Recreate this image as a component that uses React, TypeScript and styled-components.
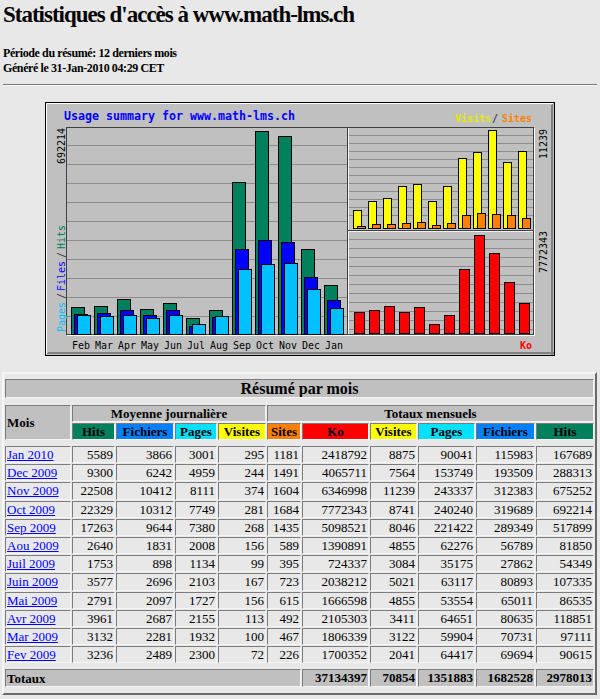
import React from 'react';
import styled, { createGlobalStyle } from 'styled-components';

const GlobalStyle = createGlobalStyle`
  html, body { margin: 0; padding: 0; background: #E8E8E8; }
  body { font-family: "Liberation Serif", "Times New Roman", serif; color: #000; }
`;

const Page = styled.div`
  padding: 0 3px 0 3px;
  width: 600px;
  box-sizing: border-box;
`;

const Title = styled.h2`
  margin: 0;
  font-size: 23px;
  line-height: 30px;
  letter-spacing: -1px;
  font-weight: bold;
`;

const Meta = styled.div`
  margin-top: 16px;
  font-size: 12px;
  line-height: 15px;
  letter-spacing: -0.4px;
  font-weight: bold;
`;

const Rule = styled.hr`
  margin: 8px 0 0 0;
  border: 0;
  border-top: 1px solid #7a7a7a;
  border-bottom: 1px solid #f8f8f8;
  height: 0;
`;

const ChartRow = styled.div`
  display: flex;
  justify-content: center;
  margin-top: 16px;
`;

const ChartSvg = styled.svg`
  display: block;
`;

const Summary = styled.table`
  margin-top: 16px;
  width: 595px;
  margin-left: -1px;
  table-layout: fixed;
  border-collapse: separate;
  border-spacing: 1px;
  border: 2px solid;
  border-color: #f6f6f6 #6a6a6a #6a6a6a #f6f6f6;
  font-size: 13px;
`;

const Spacer = styled.td<{ $h: number }>`
  height: ${(p) => p.$h}px;
  padding: 0;
  border: 0;
  line-height: 0;
  font-size: 0;
`;

const HeadCell = styled.th<{ $bg?: string; $align?: string; $big?: boolean }>`
  background: ${(p) => p.$bg || '#C0C0C0'};
  text-align: ${(p) => p.$align || 'center'};
  font-size: ${(p) => (p.$big ? '16px' : '13px')};
  line-height: ${(p) => (p.$big ? '17px' : '15px')};
  font-weight: bold;
  padding: 0 1px;
  border: 1px solid;
  border-color: #7c7c7c #f4f4f4 #f4f4f4 #7c7c7c;
  white-space: nowrap;
  overflow: hidden;
`;

const DataCell = styled.td<{ $bold?: boolean; $gray?: boolean }>`
  text-align: right;
  padding: 0 1px;
  line-height: 15.2px;
  font-weight: ${(p) => (p.$bold ? 'bold' : 'normal')};
  background: ${(p) => (p.$gray ? '#C0C0C0' : 'transparent')};
  border: 1px solid;
  border-color: #7c7c7c #f4f4f4 #f4f4f4 #7c7c7c;
  white-space: nowrap;
  overflow: hidden;
`;

const MonthCell = styled(DataCell)`
  text-align: left;
`;

const MonthLink = styled.a`
  color: #0000ff;
  text-decoration: underline;
`;

const months = ['Feb', 'Mar', 'Apr', 'May', 'Jun', 'Jul', 'Aug', 'Sep', 'Oct', 'Nov', 'Dec', 'Jan'];
const hits = [90615, 97111, 118851, 86535, 107335, 54349, 81850, 517899, 692214, 675252, 288313, 167689];
const files = [69694, 70731, 80635, 65011, 80893, 27862, 56789, 289349, 319689, 312383, 193509, 115983];
const pages = [64417, 59904, 64651, 53554, 63117, 35175, 62276, 221422, 240240, 243337, 153749, 90041];
const visits = [2041, 3122, 3411, 4855, 5021, 3084, 4855, 8046, 8741, 11239, 7564, 8875];
const sites = [226, 467, 492, 615, 723, 395, 589, 1435, 1684, 1604, 1491, 1181];
const kb = [1700352, 1806339, 2105303, 1666598, 2038212, 724337, 1390891, 5098521, 7772343, 6346998, 4065711, 2418792];

const rows: [string, number[]][] = [
  ['Jan 2010', [5589, 3866, 3001, 295, 1181, 2418792, 8875, 90041, 115983, 167689]],
  ['Dec 2009', [9300, 6242, 4959, 244, 1491, 4065711, 7564, 153749, 193509, 288313]],
  ['Nov 2009', [22508, 10412, 8111, 374, 1604, 6346998, 11239, 243337, 312383, 675252]],
  ['Oct 2009', [22329, 10312, 7749, 281, 1684, 7772343, 8741, 240240, 319689, 692214]],
  ['Sep 2009', [17263, 9644, 7380, 268, 1435, 5098521, 8046, 221422, 289349, 517899]],
  ['Aou 2009', [2640, 1831, 2008, 156, 589, 1390891, 4855, 62276, 56789, 81850]],
  ['Juil 2009', [1753, 898, 1134, 99, 395, 724337, 3084, 35175, 27862, 54349]],
  ['Juin 2009', [3577, 2696, 2103, 167, 723, 2038212, 5021, 63117, 80893, 107335]],
  ['Mai 2009', [2791, 2097, 1727, 156, 615, 1666598, 4855, 53554, 65011, 86535]],
  ['Avr 2009', [3961, 2687, 2155, 113, 492, 2105303, 3411, 64651, 80635, 118851]],
  ['Mar 2009', [3132, 2281, 1932, 100, 467, 1806339, 3122, 59904, 70731, 97111]],
  ['Fev 2009', [3236, 2489, 2300, 72, 226, 1700352, 2041, 64417, 69694, 90615]],
];

const totals = [37134397, 70854, 1351883, 1682528, 2978013];
const colWidths = [66, 43, 58, 42, 48, 34, 67, 47, 57, 59, 58];

const W = 510;
const H = 254;
const FONT = '"DejaVu Sans Mono", "Liberation Mono", monospace';

function Bar({ x, y, w, bottom, fill }: { x: number; y: number; w: number; bottom: number; fill: string }) {
  const top = Math.round(y);
  return <rect x={x + 0.5} y={top + 0.5} width={w} height={Math.max(bottom - top, 0)} fill={fill} stroke="#000" strokeWidth={1} />;
}

function MonoText({ x, y, text, fill, bold, size = 10, adv = 6 }: { x: number; y: number; text: string; fill: string; bold?: boolean; size?: number; adv?: number }) {
  return (
    <text x={x} y={y} fill={fill} fontFamily={FONT} fontSize={size} fontWeight={bold ? 'bold' : 'normal'} textLength={text.length * adv} lengthAdjust="spacingAndGlyphs">
      {text}
    </text>
  );
}

function UpText({ x, y, text, fill }: { x: number; y: number; text: string; fill: string }) {
  return (
    <g transform={`translate(${x} ${y}) rotate(-90)`}>
      <MonoText x={0} y={0} text={text} fill={fill} />
    </g>
  );
}

function UsageChart() {
  const maxHits = Math.max(...hits);
  const maxVisits = Math.max(...visits);
  const maxKb = Math.max(...kb);
  const leftLines = Array.from({ length: 10 }, (_, i) => 24 + 19 * (i + 1));
  const trLines = Array.from({ length: 11 }, (_, i) => 25 + 8 * (i + 1)).filter((v) => v < 127);
  const brLines = Array.from({ length: 11 }, (_, i) => 128 + 9 * (i + 1)).filter((v) => v < 231);
  return (
    <ChartSvg width={W} height={H} viewBox={`0 0 ${W} ${H}`}>
      <rect x={0} y={0} width={W} height={H} fill="#C0C0C0" />
      {/* outer bevel */}
      <rect x={0.5} y={0.5} width={W - 1} height={H - 1} fill="none" stroke="#000" />
      <line x1={1} y1={1.5} x2={W - 2} y2={1.5} stroke="#fff" />
      <line x1={1.5} y1={1} x2={1.5} y2={H - 2} stroke="#fff" />
      <line x1={2} y1={H - 2.5} x2={W - 1} y2={H - 2.5} stroke="#808080" />
      <line x1={3} y1={H - 3.5} x2={W - 1} y2={H - 3.5} stroke="#808080" />
      <line x1={W - 2.5} y1={2} x2={W - 2.5} y2={H - 1} stroke="#808080" />
      <line x1={W - 3.5} y1={3} x2={W - 3.5} y2={H - 1} stroke="#808080" />

      {/* grid lines */}
      {leftLines.map((y) => (
        <line key={`l${y}`} x1={22} y1={y + 0.5} x2={302} y2={y + 0.5} stroke="#8c8c8c" />
      ))}
      {trLines.map((y) => (
        <line key={`t${y}`} x1={303} y1={y + 0.5} x2={488} y2={y + 0.5} stroke="#8c8c8c" />
      ))}
      {brLines.map((y) => (
        <line key={`b${y}`} x1={303} y1={y + 0.5} x2={488} y2={y + 0.5} stroke="#8c8c8c" />
      ))}

      {/* frames */}
      <rect x={21.5} y={25.5} width={467} height={207} fill="none" stroke="#404040" />
      <line x1={22} y1={233.5} x2={490} y2={233.5} stroke="#fff" />
      <line x1={489.5} y1={26} x2={489.5} y2={234} stroke="#fff" />
      <line x1={302.5} y1={26} x2={302.5} y2={232} stroke="#404040" />
      <line x1={303.5} y1={26} x2={303.5} y2={232} stroke="#f0f0f0" />
      <line x1={303} y1={128.5} x2={488} y2={128.5} stroke="#404040" />
      <line x1={303} y1={129.5} x2={488} y2={129.5} stroke="#f0f0f0" />

      {/* hits / files / pages */}
      {hits.map((v, i) => (
        <g key={`h${i}`}>
          <Bar x={26 + i * 23} y={232 - (v / maxHits) * 203} w={13} bottom={232} fill="#00805C" />
          <Bar x={29 + i * 23} y={232 - (files[i] / maxHits) * 203} w={13} bottom={232} fill="#0000FF" />
          <Bar x={32 + i * 23} y={232 - (pages[i] / maxHits) * 203} w={13} bottom={232} fill="#00C0FF" />
        </g>
      ))}

      {/* visits / sites */}
      {visits.map((v, i) => (
        <g key={`v${i}`}>
          <Bar x={308 + i * 15} y={126 - (v / maxVisits) * 98} w={8} bottom={126} fill="#FFFF00" />
          <Bar x={312 + i * 15} y={126 - (sites[i] / maxVisits) * 98} w={8} bottom={126} fill="#FF8000" />
        </g>
      ))}

      {/* kbytes */}
      {kb.map((v, i) => (
        <Bar key={`k${i}`} x={309 + i * 15} y={231 - (v / maxKb) * 98} w={10} bottom={231} fill="#FF0000" />
      ))}

      {/* labels */}
      <MonoText x={19} y={18} text="Usage summary for www.math-lms.ch" fill="#0000FF" bold size={11.5} adv={7} />
      <MonoText x={410} y={20} text="Visits" fill="#E8E800" bold />
      <MonoText x={447} y={20} text="/" fill="#404040" bold />
      <MonoText x={457} y={20} text="Sites" fill="#FF8000" bold />
      {months.map((m, i) => (
        <MonoText key={m} x={27 + i * 23} y={247} text={m} fill="#000" />
      ))}
      <MonoText x={475} y={247} text="Ko" fill="#FF0000" bold />
      <UpText x={19.5} y={62} text="692214" fill="#000" />
      <UpText x={19.5} y={230} text="Pages" fill="#00C0FF" />
      <UpText x={19.5} y={197} text="/" fill="#404040" />
      <UpText x={19.5} y={189} text="Files" fill="#0000FF" />
      <UpText x={19.5} y={156} text="/" fill="#404040" />
      <UpText x={19.5} y={147} text="Hits" fill="#00805C" />
      <UpText x={502} y={57} text="11239" fill="#000" />
      <UpText x={502} y={171} text="7772343" fill="#000" />
    </ChartSvg>
  );
}

export default function App() {
  return (
    <Page>
      <GlobalStyle />
      <Title>Statistiques d'accès à www.math-lms.ch</Title>
      <Meta>
        Période du résumé: 12 derniers mois
        <br />
        Généré le 31-Jan-2010 04:29 CET
      </Meta>
      <Rule />
      <ChartRow>
        <UsageChart />
      </ChartRow>
      <Summary>
        <colgroup>
          {colWidths.map((w, i) => (
            <col key={i} style={{ width: w }} />
          ))}
        </colgroup>
        <tbody>
          <tr>
            <Spacer $h={3} colSpan={11} />
          </tr>
          <tr>
            <HeadCell colSpan={11} $big>
              Résumé par mois
            </HeadCell>
          </tr>
          <tr>
            <Spacer $h={5} colSpan={11} />
          </tr>
          <tr>
            <HeadCell rowSpan={2} $align="left">
              Mois
            </HeadCell>
            <HeadCell colSpan={4}>Moyenne journalière</HeadCell>
            <HeadCell colSpan={6}>Totaux mensuels</HeadCell>
          </tr>
          <tr>
            <HeadCell $bg="#00805C">Hits</HeadCell>
            <HeadCell $bg="#0080FF">Fichiers</HeadCell>
            <HeadCell $bg="#00E0FF">Pages</HeadCell>
            <HeadCell $bg="#FFFF00">Visites</HeadCell>
            <HeadCell $bg="#FF8000">Sites</HeadCell>
            <HeadCell $bg="#FF0000">Ko</HeadCell>
            <HeadCell $bg="#FFFF00">Visites</HeadCell>
            <HeadCell $bg="#00E0FF">Pages</HeadCell>
            <HeadCell $bg="#0080FF">Fichiers</HeadCell>
            <HeadCell $bg="#00805C">Hits</HeadCell>
          </tr>
          <tr>
            <Spacer $h={4} colSpan={11} />
          </tr>
          {rows.map(([label, vals]) => (
            <tr key={label}>
              <MonthCell>
                <MonthLink href="#">{label}</MonthLink>
              </MonthCell>
              {vals.map((v, i) => (
                <DataCell key={i}>{v}</DataCell>
              ))}
            </tr>
          ))}
          <tr>
            <Spacer $h={4} colSpan={11} />
          </tr>
          <tr>
            <HeadCell colSpan={6} $align="left">
              Totaux
            </HeadCell>
            {totals.map((v, i) => (
              <DataCell key={i} $bold $gray>
                {v}
              </DataCell>
            ))}
          </tr>
          <tr>
            <Spacer $h={4} colSpan={11} />
          </tr>
        </tbody>
      </Summary>
    </Page>
  );
}
